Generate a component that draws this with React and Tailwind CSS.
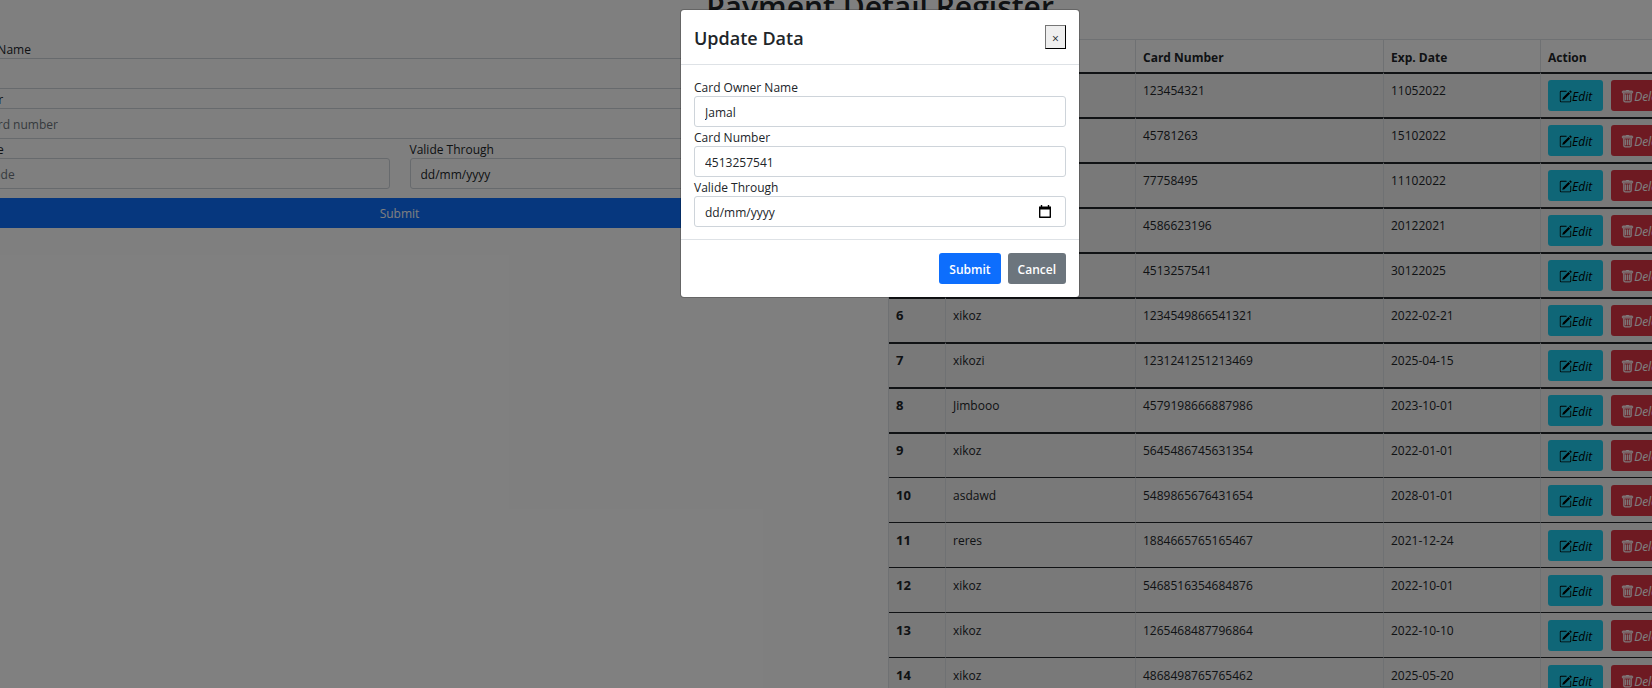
import { BsPencilSquare, BsTrash } from "react-icons/bs";

const cards = [
  ["Jamal", "123454321", "11052022"],
  ["Jamal", "45781263", "15102022"],
  ["Jamal", "77758495", "11102022"],
  ["Jamal", "4586623196", "20122021"],
  ["Jamal", "4513257541", "30122025"],
  ["xikoz", "1234549866541321", "2022-02-21"],
  ["xikozi", "1231241251213469", "2025-04-15"],
  ["Jimbooo", "4579198666887986", "2023-10-01"],
  ["xikoz", "5645486745631354", "2022-01-01"],
  ["asdawd", "5489865676431654", "2028-01-01"],
  ["reres", "1884665765165467", "2021-12-24"],
  ["xikoz", "5468516354684876", "2022-10-01"],
  ["xikoz", "1265468487796864", "2022-10-10"],
  ["xikoz", "4868498765765462", "2025-05-20"],
];

const labelClass = "block h-[19px] leading-[21px]";
const fieldClass =
  "block h-[31px] w-full rounded-[3px] border border-[#ced4da] bg-white px-[10px] pt-[2px] text-[#212529] outline-none placeholder:text-[#6c757d]";

function Field({ id, label, ...props }) {
  return (
    <div className="min-w-0 flex-1">
      <label htmlFor={id} className={labelClass}>{label}</label>
      <input id={id} type="text" className={fieldClass} {...props} />
    </div>
  );
}

function DateField({ id }) {
  return (
    <div className="min-w-0 flex-1">
      <label htmlFor={id} className={labelClass}>Valide Through</label>
      <div className="flex h-[31px] items-center rounded-[3px] border border-[#ced4da] bg-white pr-[13px] pl-[10px]">
        <input
          id={id}
          type="text"
          placeholder="dd/mm/yyyy"
          className="min-w-0 flex-1 bg-transparent pt-[2px] outline-none placeholder:text-[#212529]"
        />
        <button type="button" aria-label="Open calendar">
          <svg width="14" height="14" viewBox="0 0 14 14" fill="none" stroke="#000">
            <path d="M1.7 3v9.2h10.6V3" strokeWidth="1.4" strokeLinejoin="round" />
            <path d="M1 1.5h12v3H1z" fill="#000" stroke="none" />
            <path d="M3.5 0v3M10.5 0v3" strokeWidth="1.4" />
          </svg>
        </button>
      </div>
    </div>
  );
}

function RegisterForm() {
  return (
    <form className="min-w-0 flex-1" onSubmit={(e) => e.preventDefault()}>
      <Field id="owner" label="Card Owner Name" placeholder="Full name" />
      <Field id="number" label="Card Number" placeholder="16 Digit Card number" />
      <div className="flex gap-5">
        <Field id="code" label="Security Code" placeholder="Security Code" />
        <DateField id="valid" />
      </div>
      <button type="submit" className="mt-[9px] h-[30px] w-full rounded-[3px] bg-[#0d6efd] text-white">
        Submit
      </button>
    </form>
  );
}

function CardTable() {
  return (
    <div className="min-w-0 flex-1">
      <table className="w-full table-fixed border-separate border-spacing-0 border-t border-l border-[#dee2e6] text-left">
        <colgroup>
          <col className="w-[57px]" />
          <col className="w-[190px]" />
          <col className="w-[248px]" />
          <col className="w-[157px]" />
          <col />
        </colgroup>
        <thead>
          <tr className="h-8">
            {["#", "Name", "Card Number", "Exp. Date", "Action"].map((h) => (
              <th key={h} className="border-r border-[#dee2e6] px-[7px] pt-[2px] font-bold">{h}</th>
            ))}
          </tr>
        </thead>
        <tbody>
          {cards.map((card, i) => {
            const cell =
              "border-r border-r-[#dee2e6] border-t-[#212529] px-[7px] align-top " +
              (i < 9 ? "border-t-2 pt-[6px]" : "border-t pt-[7px]");
            return (
              <tr key={i} className="h-[45px] bg-[#f2f2f2]">
                <th scope="row" className={cell + " text-[13px] leading-[21px] font-bold"}>{i + 1}</th>
                {card.map((value, j) => (
                  <td key={j} className={cell + " leading-[21px]"}>{value}</td>
                ))}
                <td className={cell}>
                  <div className="flex gap-2">
                    <button type="button" className="flex h-[31px] items-center rounded-[3px] bg-[#1fcdee] px-[11px] pt-[2px] text-black italic">
                      <BsPencilSquare size={13} />Edit
                    </button>
                    <button type="button" className="flex h-[31px] items-center rounded-[3px] bg-[#dc3545] px-[10px] pt-[2px] text-white italic">
                      <BsTrash size={13} className="stroke-current [stroke-width:0.5]" />Delete
                    </button>
                  </div>
                </td>
              </tr>
            );
          })}
        </tbody>
      </table>
    </div>
  );
}

function UpdateDialog() {
  return (
    <div className="absolute inset-0 flex items-start justify-center bg-black/50 pt-[9px]">
      <div
        role="dialog"
        aria-modal="true"
        aria-labelledby="dialog-title"
        className="w-[400px] rounded-[4px] border border-black/20 bg-white bg-clip-padding"
      >
        <div className="flex h-[55px] items-center justify-between border-b border-[#dee2e6] px-[13px]">
          <h5 id="dialog-title" className="pt-[2px] text-[18px] font-semibold">Update Data</h5>
          <button
            type="button"
            aria-label="Close"
            className="h-6 w-[21px] border border-t-[#767676] border-r-black border-b-black border-l-[#767676] bg-[#efefef] pt-[2px]"
          >
            ×
          </button>
        </div>
        <form onSubmit={(e) => e.preventDefault()}>
          <div className="px-[13px] py-3">
            <Field id="edit-owner" label="Card Owner Name" defaultValue="Jamal" />
            <Field id="edit-number" label="Card Number" defaultValue="4513257541" />
            <DateField id="edit-valid" />
          </div>
          <div className="flex justify-end gap-[7px] border-t border-[#dee2e6] p-[13px]">
            <button type="submit" className="h-[31px] rounded-[3px] bg-[#0d6efd] px-[10px] pt-[2px] font-semibold text-white">Submit</button>
            <button type="button" className="h-[31px] rounded-[3px] bg-[#6c757d] px-[10px] pt-[2px] font-semibold text-white">Cancel</button>
          </div>
        </form>
      </div>
    </div>
  );
}

export default function App() {
  return (
    <div className="h-screen overflow-hidden bg-white font-['Open_Sans',sans-serif] text-[12px] leading-[19px] text-[#212529]">
      <div className="relative -mr-[193px] -ml-[85px] h-full overflow-hidden px-3">
        <h1 className="-mt-[12px] mb-[13px] text-center text-[30px] leading-[38px] font-semibold">Payment Detail Register</h1>
        <div className="flex items-start gap-4">
          <RegisterForm />
          <CardTable />
        </div>
        <UpdateDialog />
      </div>
    </div>
  );
}
